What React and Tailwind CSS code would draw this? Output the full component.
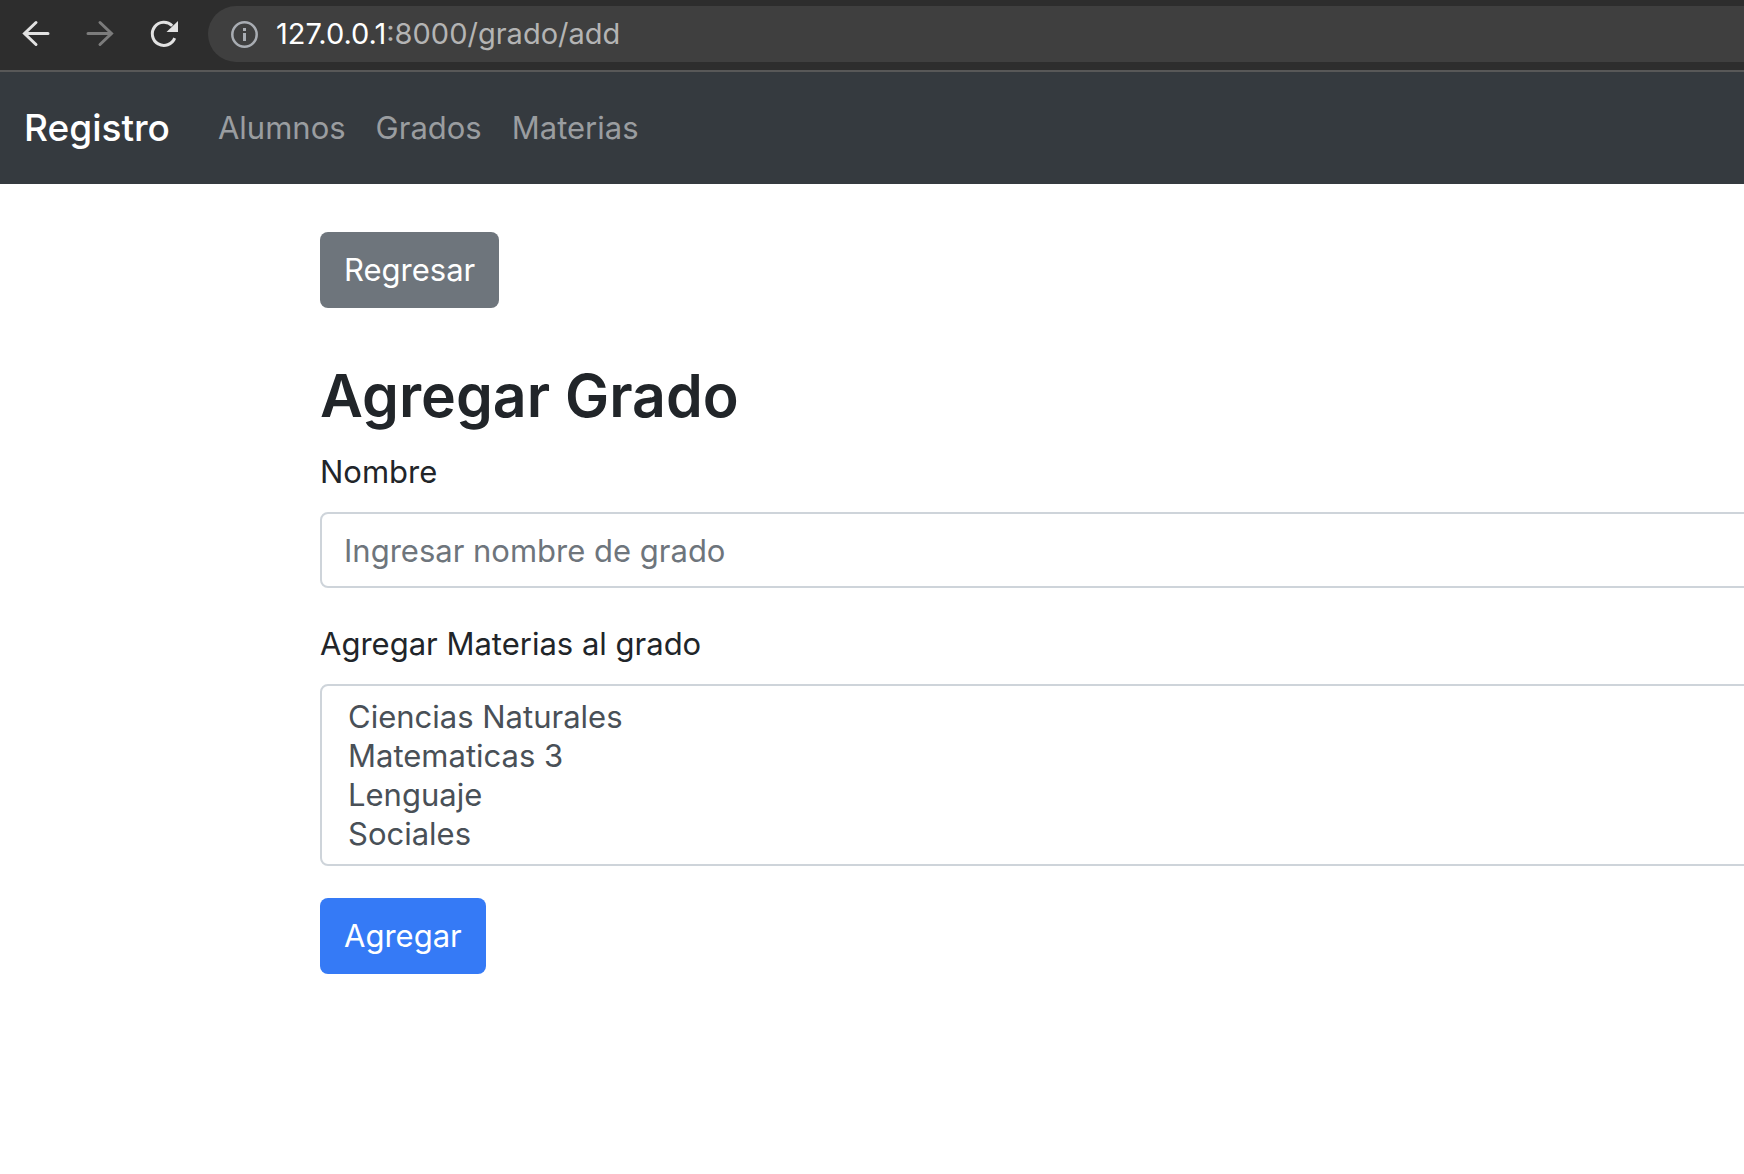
const subjects = ["Ciencias Naturales", "Matematicas 3", "Lenguaje", "Sociales"];

function BrowserBar() {
  return (
    <div className="flex h-[72px] items-center border-b-2 border-[#585858] bg-[#2d2d2d] pb-0.5 pl-4">
      <div className="flex shrink-0 gap-6">
        <button type="button" aria-label="Atrás" className="size-10 text-[#e2e2e2]">
          <svg viewBox="0 0 40 40" className="size-10" fill="none" stroke="currentColor" strokeWidth="3">
            <path d="M32 19.5H9M20 8.5L8.5 19.5l11.5 11" strokeLinecap="round" />
          </svg>
        </button>
        <button type="button" aria-label="Adelante" className="size-10 text-[#7c7c7c]">
          <svg viewBox="0 0 40 40" className="size-10" fill="none" stroke="currentColor" strokeWidth="3">
            <path d="M8 19.5H31M20 8.5l11.5 11-11.5 11" strokeLinecap="round" />
          </svg>
        </button>
        <button type="button" aria-label="Recargar" className="size-10 text-[#e2e2e2]">
          <svg viewBox="0 0 40 40" className="size-10">
            <path
              d="M30.7 24.1A11.6 11.6 0 1 1 28.2 11.7"
              fill="none"
              stroke="currentColor"
              strokeWidth="3"
            />
            <path d="M34 7V18H22.5Z" fill="currentColor" />
          </svg>
        </button>
      </div>
      <div className="ml-6 flex h-14 flex-1 items-center gap-[18px] rounded-l-full bg-[#3f3f3f] pl-[22px]">
        <svg viewBox="0 0 28 28" className="size-7 shrink-0 text-[#a9adb3]">
          <circle cx="14.5" cy="14.5" r="12.2" fill="none" stroke="currentColor" strokeWidth="2.5" />
          <path d="M13 8h3v3h-3zM13 13h3v8h-3z" fill="currentColor" />
        </svg>
        <p className="text-[29px] leading-10 text-[#b4b4b4]">
          <span className="text-white">127.0.0.1</span>:8000/grado/add
        </p>
      </div>
    </div>
  );
}

function SiteNav() {
  return (
    <nav className="flex h-28 items-center bg-[#353a3f] px-6">
      <a href="#inicio" className="mr-12 text-[37px] leading-[60px] font-medium text-white">
        Registro
      </a>
      <div className="flex gap-[30px] text-[31px] leading-12 text-[#9a9da0]">
        <a href="#alumnos">Alumnos</a>
        <a href="#grados">Grados</a>
        <a href="#materias">Materias</a>
      </div>
    </nav>
  );
}

export default function App() {
  return (
    <div className="min-h-screen overflow-x-hidden bg-white font-['Inter',sans-serif] text-[#212529]">
      <BrowserBar />
      <SiteNav />
      <main className="-mr-4 pt-12 pl-80 text-[31px] leading-12">
        <button type="button" className="h-[76px] rounded-lg bg-[#6e757c] px-6 text-white">
          Regresar
        </button>
        <h1 className="mt-12 mb-3 text-[59px] leading-[80px] font-semibold">Agregar Grado</h1>
        <form>
          <label htmlFor="nombre" className="mb-4 block">
            Nombre
          </label>
          <input
            id="nombre"
            type="text"
            placeholder="Ingresar nombre de grado"
            className="mb-8 block h-[76px] w-full rounded-lg border-2 border-[#ced4da] px-[22px] placeholder:text-[#6e757c]"
          />
          <label htmlFor="materias" className="mb-4 block">
            Agregar Materias al grado
          </label>
          <select
            id="materias"
            multiple
            size={4}
            className="mb-8 block h-[182px] w-full overflow-hidden rounded-lg border-2 border-[#ced4da] px-[22px] py-3 text-[#495057]"
          >
            {subjects.map((subject) => (
              <option key={subject} className="h-[39px] px-1 py-0 leading-[39px]">
                {subject}
              </option>
            ))}
          </select>
          <button type="submit" className="h-[76px] rounded-lg bg-[#357af6] px-6 text-white">
            Agregar
          </button>
        </form>
      </main>
    </div>
  );
}
